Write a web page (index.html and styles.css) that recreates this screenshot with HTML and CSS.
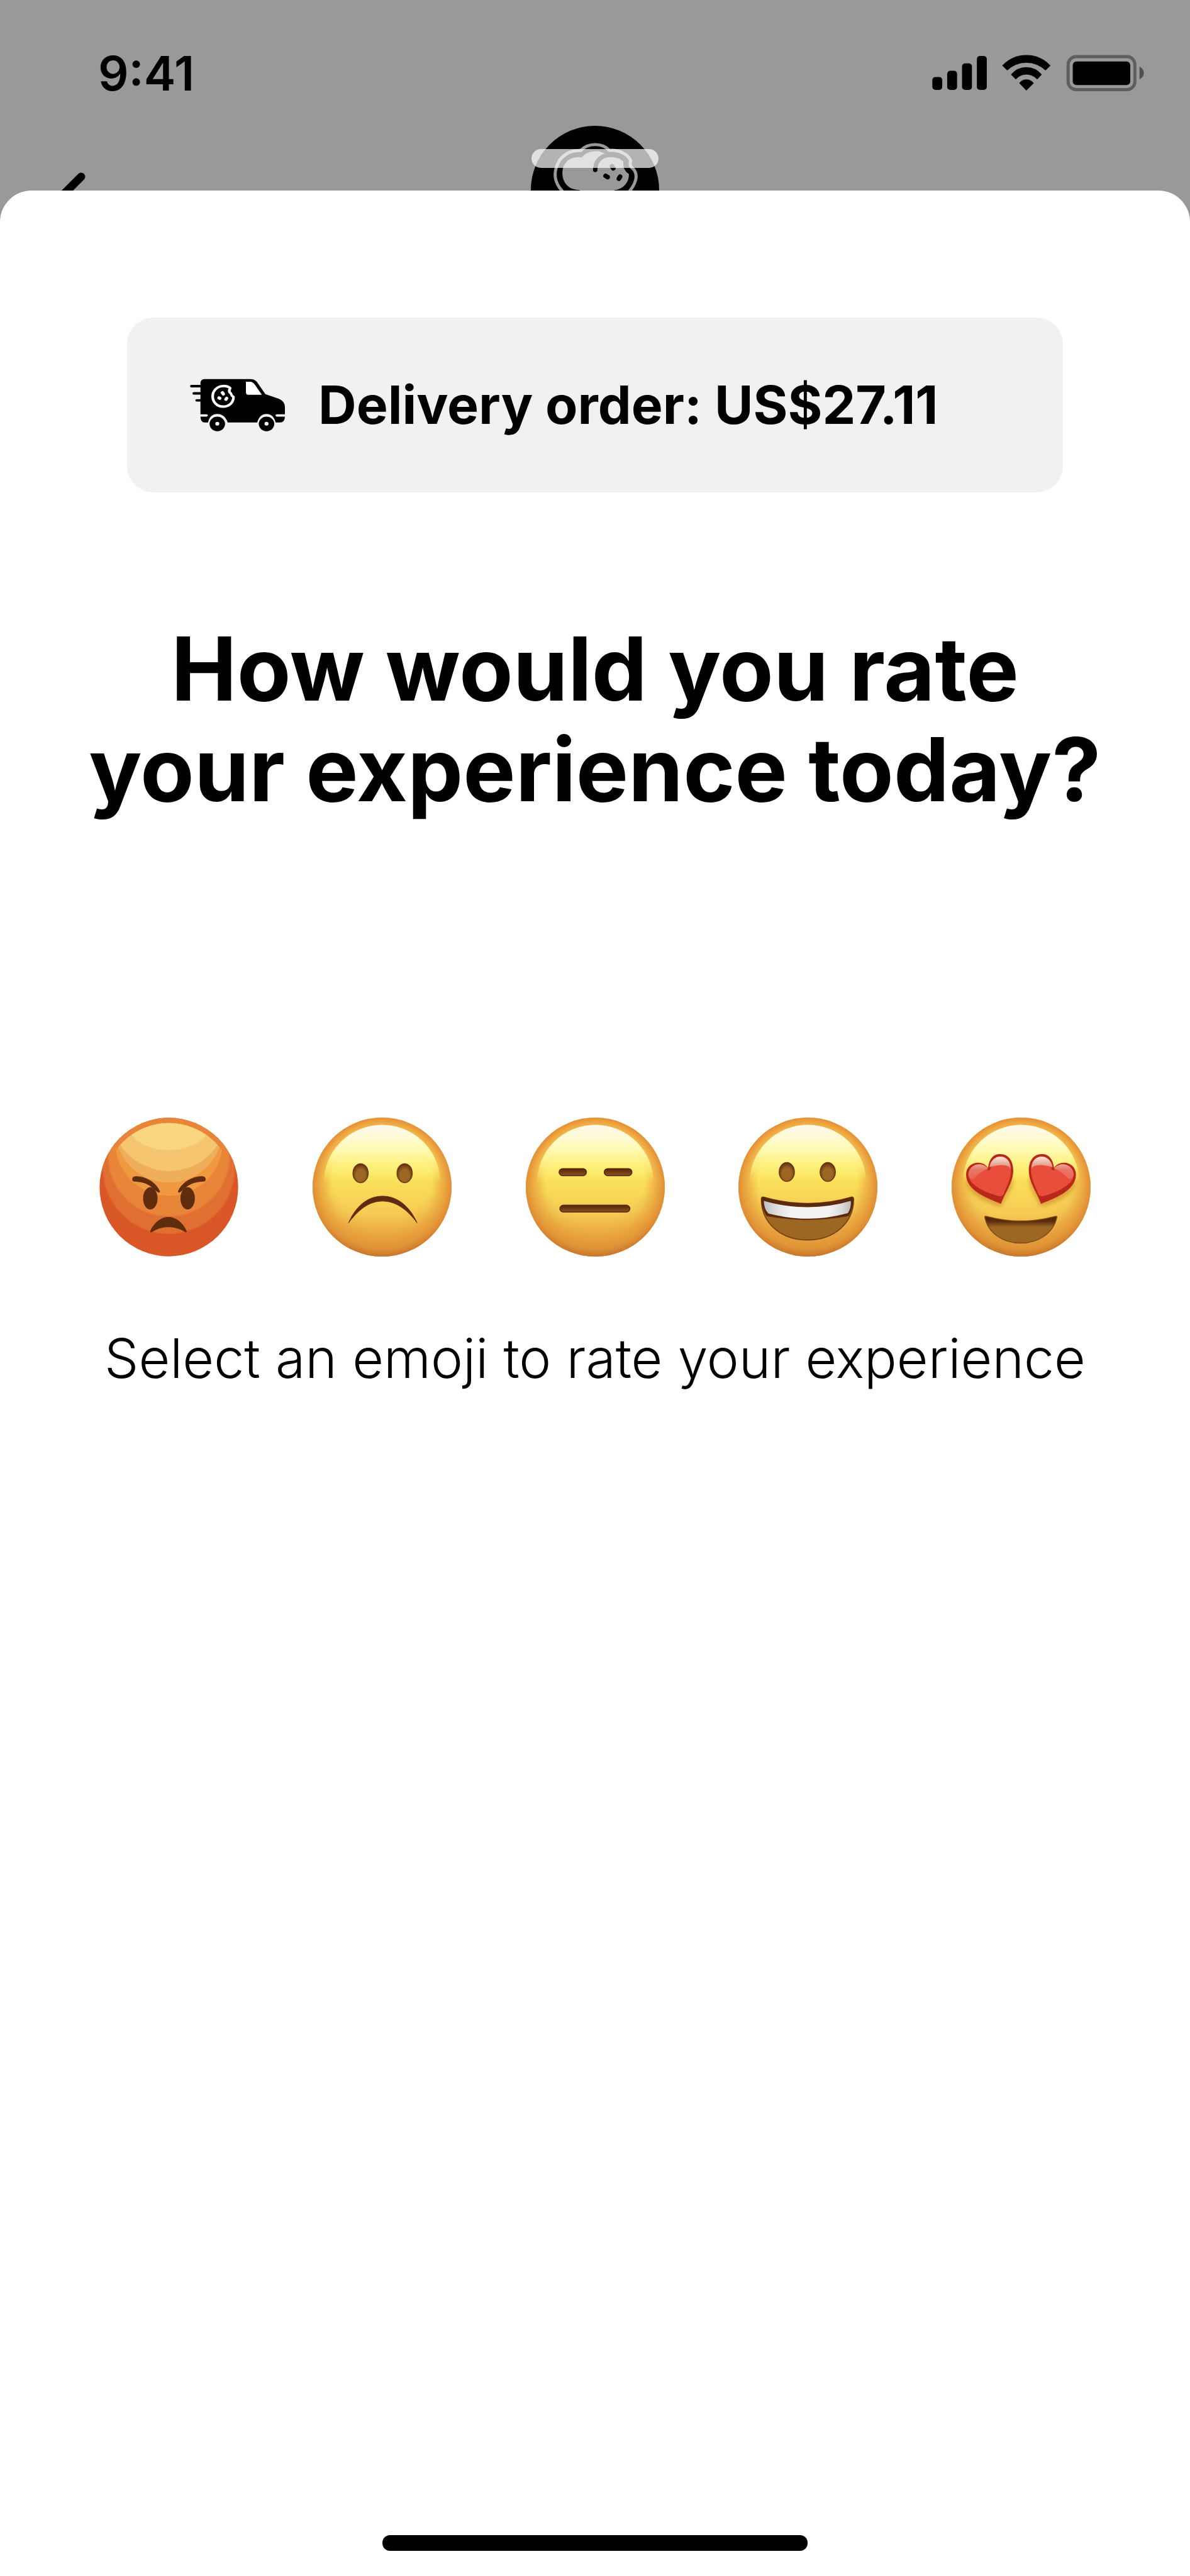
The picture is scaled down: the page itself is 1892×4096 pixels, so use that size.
FILE: index.html
```html
<!DOCTYPE html>
<html lang="en">
<head>
<meta charset="utf-8">
<meta name="viewport" content="width=device-width, initial-scale=1">
<title>Rate your experience</title>
<link rel="stylesheet" href="styles.css">
</head>
<body>
<div class="screen">
  <div class="status-bar">
    <time class="clock">9:41</time>
    <svg class="status-icons" viewBox="1505 88 343 60" aria-hidden="true">
      <rect x="1505" y="124" width="16" height="21" rx="5"/>
      <rect x="1529" y="114" width="16" height="31" rx="5"/>
      <rect x="1553" y="102" width="16" height="43" rx="5"/>
      <rect x="1577" y="90" width="16" height="55" rx="5"/>
      <path d="M1618 105.500Q1634 88.500 1657 88.500T1696 105.500L1688 113.500Q1674 101 1657 101T1626 113.500Z"/>
      <path d="M1632 120Q1642 108 1657 108T1682 120L1674.500 128Q1667 120 1657 120T1640 128Z"/>
      <path d="M1645.500 134Q1650 128 1657 128T1669 134L1657 146Z"/>
      <rect x="1724.500" y="91" width="108" height="53.500" rx="13" fill="none" stroke="#5e5e5e" stroke-width="5"/>
      <rect x="1732" y="99" width="93" height="38" rx="6"/>
      <path d="M1840 107Q1847 111 1847 117.500T1840 128Z" fill="#505050"/>
    </svg>
  </div>
  <header class="app-header">
    <button class="back" type="button" aria-label="Back">
      <svg viewBox="0 0 60 100" aria-hidden="true"><path d="M53 7L10 50L53 93" fill="none" stroke="#000" stroke-width="13" stroke-linecap="round" stroke-linejoin="round"/></svg>
    </button>
    <svg class="logo" viewBox="170 68 618 618" role="img" aria-label="Cookie logo">
      <circle cx="479" cy="377" r="309"/>
      <path d="M340 400C285 355 280 305 293 268C308 215 355 185 410 187C445 149 515 149 549 187C592 182 640 205 651 237C645 255 650 266 660 273C690 300 680 350 630 400" fill="none" stroke="#999" stroke-width="15"/>
      <path d="M405 377C350 377 322 340 322 295C322 245 360 213 415 221C440 188 495 180 527 203L560 218C590 218 612 228 617 240C612 265 622 285 642 300C645 345 605 377 573 377V420H405Z" fill="#999"/>
      <path d="M480 281C480 240 507 209 553 208C590 207 617 222 628 240C624 260 630 280 650 292" fill="none" stroke="#000" stroke-width="21" stroke-linecap="round"/>
      <path d="M530 309L540 315M600 313L594 323M561 263L567 273" stroke="#000" stroke-width="22" stroke-linecap="round"/>
    </svg>
  </header>

  <main class="sheet">
    <span class="grabber"></span>
    <div class="order">
      <svg class="van" viewBox="107 111 154 86" aria-hidden="true">
        <g transform="scale(.357143 .333333)">
          <path d="M306 369H352M317 404H352M330 438H352" stroke="#000" stroke-width="12" stroke-linecap="round"/>
          <path d="M347 357Q347 335 366 335H572Q590 335 601 348L640 408L700 430Q728 442 728 470V515Q728 545 706 545H686Q676 504 645 504T603 545H470Q456 504 423 504T381 545H366Q347 545 347 515Z"/>
          <path d="M552 348H572Q582 348 592 362L624 411H563Q552 411 552 398Z" fill="#fff"/>
          <path d="M345 511H375M691 511H730" stroke="#f1f1f1" stroke-width="11" stroke-linecap="round"/>
          <circle cx="423" cy="552" r="35"/><circle cx="645" cy="552" r="35"/>
          <circle cx="423" cy="551" r="9" fill="#fff"/><circle cx="645" cy="551" r="9" fill="#fff"/>
          <path d="M481 379C472 370 458 368 447 369C421 371 402 392 402 419C402 447 422 468 449 468C475 468 496 450 496 421C486 417 487 411 484 404C474 398 475 390 481 379Z" fill="none" stroke="#fff" stroke-width="12" stroke-linejoin="round"/>
          <path d="M446 401L450 407M431 426L434 428M465 428L462 433" stroke="#fff" stroke-width="15" stroke-linecap="round"/>
        </g>
      </svg>
      <p class="order-text">Delivery order: US$27.11</p>
    </div>

    <h1 class="title">How would you rate<br>your experience today?</h1>

    <div class="ratings" role="group" aria-labelledby="hint">
      <button class="rating" type="button" aria-label="Terrible">
        <svg viewBox="64 66 672 674">
          <defs>
            <clipPath id="face-a"><circle cx="400" cy="403" r="336"/></clipPath>
            <clipPath id="shine-a"><circle cx="400" cy="410" r="317"/></clipPath>
            <filter id="soft-a" x="-10%" y="-10%" width="120%" height="120%"><feGaussianBlur stdDeviation="4"/></filter>
          </defs>
          <g clip-path="url(#face-a)">
            <rect x="60" y="60" width="680" height="690" fill="#d95626"/>
            <g filter="url(#soft-a)">
              <circle cx="400" cy="309" r="321" fill="#e06f30"/>
              <ellipse cx="400" cy="255" rx="294" ry="290" fill="#e98538"/>
            </g>
            <path d="M120 190Q220 72 400 72T680 190L650 210Q560 96 400 96T150 210Z" fill="#e98538"/>
          </g>
          <g clip-path="url(#shine-a)">
            <circle cx="400" cy="184" r="261" fill="#ef9a40"/>
            <circle cx="400" cy="121" r="260" fill="#f0ae5a"/>
            <circle cx="400" cy="41" r="284" fill="#f5c570"/>
            <ellipse cx="400" cy="110" rx="192" ry="114" fill="#f9d780"/>
          </g>
          <g fill="#5f2c0e">
            <ellipse cx="310" cy="458" rx="35" ry="54"/><ellipse cx="491" cy="458" rx="35" ry="54"/>
            <path d="M222 365C225 348 242 350 260 352C305 360 342 388 357 424C355 432 350 431 344 427L320 407C300 387 266 376 232 376Q222 374 222 365Z"/>
            <path d="M579 365C576 348 559 350 541 352C496 360 459 388 444 424C446 432 451 431 457 427L481 407C501 387 535 376 569 376Q579 374 579 365Z"/>
            <path d="M309 617C330 572 364 548 398 548S466 572 487 617Q486 625 478 621C430 590 366 590 318 621Q309 625 309 617Z"/>
          </g>
        </svg>
      </button>
      <button class="rating" type="button" aria-label="Bad">
        <svg viewBox="72 67 672 672">
          <defs>
            <linearGradient id="body" x1="0" y1="0" x2="0" y2="1">
              <stop offset="0" stop-color="#fbd84f"/><stop offset=".3" stop-color="#fdec68"/><stop offset=".48" stop-color="#f9de58"/><stop offset=".68" stop-color="#f6cb54"/><stop offset=".85" stop-color="#efae41"/><stop offset="1" stop-color="#df9637"/>
            </linearGradient>
            <radialGradient id="rim">
              <stop offset=".72" stop-color="#f0a23c" stop-opacity="0"/><stop offset=".88" stop-color="#eea33e" stop-opacity=".65"/><stop offset="1" stop-color="#e88d37"/>
            </radialGradient>
            <radialGradient id="shade" cx=".5" cy=".38" r=".66">
              <stop offset=".55" stop-color="#e09a38" stop-opacity="0"/><stop offset=".84" stop-color="#d88b32" stop-opacity=".55"/><stop offset="1" stop-color="#b36125"/>
            </radialGradient>
            <linearGradient id="shine" x1="0" y1="0" x2="0" y2="1">
              <stop offset="0" stop-color="#fcf9ee"/><stop offset=".12" stop-color="#fffbd2"/><stop offset=".24" stop-color="#fff8a8"/><stop offset=".36" stop-color="#fef180" stop-opacity=".8"/><stop offset=".5" stop-color="#fded6c" stop-opacity="0"/>
            </linearGradient>
            <radialGradient id="hollow" cx=".5" cy=".6" r=".6"><stop offset=".5" stop-color="#9c6723"/><stop offset="1" stop-color="#5f2b0e"/></radialGradient>
            <linearGradient id="slot" x1="0" y1="0" x2="0" y2="1"><stop offset="0" stop-color="#542408"/><stop offset=".4" stop-color="#6c3812"/><stop offset="1" stop-color="#8a551b"/></linearGradient>
            <g id="yellow-face">
              <circle r="336" fill="url(#body)"/>
              <circle r="336" fill="url(#rim)"/>
              <circle r="336" fill="url(#shade)"/>
              <ellipse cy="-20" rx="282" ry="281" fill="url(#shine)"/>
            </g>
          </defs>
          <use href="#yellow-face" x="408" y="403"/>
          <g fill="url(#hollow)" stroke="#6b3812" stroke-width="4">
            <ellipse cx="304" cy="336" rx="37" ry="46"/><ellipse cx="517" cy="336" rx="37" ry="46"/>
          </g>
          <path d="M246 576C280 498 336 447 410 447S542 498 577 576C534 517 478 471 410 471S290 517 246 576Z" fill="#5f2b0e" stroke="#5f2b0e" stroke-width="3" stroke-linejoin="round"/>
        </svg>
      </button>
      <button class="rating" type="button" aria-label="Okay">
        <svg viewBox="52 67 672 672">
          <use href="#yellow-face" x="388" y="403"/>
          <g fill="url(#slot)" stroke="#5a2a0c" stroke-width="5">
            <rect x="213" y="314" width="132" height="34" rx="17"/><rect x="431" y="314" width="134" height="34" rx="17"/><rect x="217" y="491" width="338" height="33" rx="17"/>
          </g>
        </svg>
      </button>
      <button class="rating" type="button" aria-label="Good">
        <svg viewBox="61 67 672 672">
          <defs>
            <linearGradient id="teeth"><stop offset="0" stop-color="#bcbcbc"/><stop offset=".14" stop-color="#dedede"/><stop offset=".3" stop-color="#f2f2f2"/><stop offset=".75" stop-color="#f2f2f2"/><stop offset=".9" stop-color="#dadada"/><stop offset="1" stop-color="#bcbcbc"/></linearGradient>
          </defs>
          <use href="#yellow-face" x="397" y="403"/>
          <g fill="url(#hollow)" stroke="#6b3812" stroke-width="4">
            <ellipse cx="295" cy="330" rx="37" ry="46"/><ellipse cx="493" cy="330" rx="37" ry="46"/>
          </g>
          <path d="M172 462Q172 449 184 452Q285 482 397 482T606 452Q618 449 618 462C618 574 527 659 395 659S172 574 172 462Z" fill="#9c6723" stroke="#75420f" stroke-width="5"/>
          <path d="M172 462Q172 449 184 452Q285 482 397 482T606 452Q618 449 618 462Q616 506 595 543Q490 562 395 562T196 543Q173 502 172 462Z" fill="#5b290b"/>
          <path d="M184 470Q285 500 395 500T604 470Q608 502 590 529Q490 556 395 556T206 531Q184 508 184 470Z" fill="url(#teeth)"/>
        </svg>
      </button>
      <button class="rating" type="button" aria-label="Excellent">
        <svg viewBox="73 70 672 672">
          <defs>
            <linearGradient id="gloss" gradientUnits="userSpaceOnUse" x1="0" y1="250" x2="0" y2="370"><stop offset="0" stop-color="#fff3ea"/><stop offset=".4" stop-color="#e8a592"/><stop offset=".6" stop-color="#e87767"/><stop offset="1" stop-color="#e96455"/></linearGradient>
            <filter id="glow" x="-20%" y="-20%" width="140%" height="150%"><feGaussianBlur stdDeviation="12"/></filter>
            <linearGradient id="mouth" x1="0" y1="0" x2="0" y2="1"><stop offset="0" stop-color="#4e2106"/><stop offset=".2" stop-color="#5f2f0c"/><stop offset=".4" stop-color="#9c6723"/><stop offset="1" stop-color="#9c6723"/></linearGradient>
            <g id="heart">
              <path d="M314 500C230 480 140 440 146 370Q250 330 370 370C372 410 335 450 314 500Z" fill="#cf8429" opacity=".65" filter="url(#glow)"/>
              <path d="M312 487C255 462 143 427 143 345C143 283 222 270 249 313C255 268 275 246 308 246C350 246 371 283 371 325C371 385 332 430 312 487Z" fill="#ba281b"/>
              <path d="M154 345C156 296 220 278 249 325C262 330 264 305 268 290C275 250 355 242 360 322C360 370 338 400 325 440Q318 452 300 450C225 428 154 392 154 345Z" fill="#e94d3b"/>
              <path d="M154 345C156 296 220 278 249 316Q210 330 176 368Q157 366 154 345ZM256 310C266 240 358 240 359 318Q340 285 256 310Z" fill="url(#gloss)"/>
            </g>
          </defs>
          <use href="#yellow-face" x="409" y="406"/>
          <use href="#heart"/>
          <use href="#heart" transform="translate(817 0) scale(-1 1)"/>
          <path d="M233 550Q236 545 248 549Q330 570 408 570T568 549Q580 545 582 550C568 625 497 677 407 677S247 625 233 550Z" fill="url(#mouth)" stroke="#7b4a16" stroke-width="4"/>
        </svg>
      </button>
    </div>
    <p class="hint" id="hint">Select an emoji to rate your experience</p>
    <span class="home-indicator"></span>
  </main>
</div>
</body>
</html>
```
FILE: styles.css
```css
* {
  box-sizing: border-box;
}

body {
  margin: 0;
  background: #999;
  color: #000;
  font-family: Inter, "Open Sans", sans-serif;
}

p,
h1 {
  margin: 0;
}

button {
  padding: 0;
  border: 0;
  background: none;
  cursor: pointer;
}

svg {
  display: block;
}

.screen {
  display: flex;
  flex-direction: column;
  min-height: 100vh;
}

.status-bar {
  display: flex;
  align-items: center;
  justify-content: space-between;
  height: 200px;
  padding: 32px 72px 0 156px;
}

.clock {
  font-size: 76px;
  font-weight: 600;
  line-height: 80px;
}

.status-icons {
  width: 338px;
  height: 59px;
}

.app-header {
  display: grid;
  grid-template-columns: 1fr auto 1fr;
  align-items: start;
  height: 204px;
  padding: 0 76px;
}

.back {
  width: 60px;
  height: 100px;
  margin-top: 74px;
}

.logo {
  width: 204px;
  height: 204px;
}

.sheet {
  position: relative;
  display: flex;
  flex: 1;
  flex-direction: column;
  margin-top: -101px;
  padding: 202px 0 40px;
  border-radius: 50px 50px 0 0;
  background: #fff;
}

.grabber {
  position: absolute;
  top: -66px;
  left: 50%;
  width: 202px;
  height: 30px;
  margin-left: -101px;
  border-radius: 15px;
  background: rgba(255, 255, 255, .7);
}

.order {
  display: flex;
  align-items: center;
  gap: 52px;
  height: 278px;
  margin: 0 202px;
  padding: 0 100px;
  border-radius: 42px;
  background: #f1f1f1;
}

.van {
  flex: none;
  width: 152px;
  height: 85px;
}

.order-text {
  font-size: 84px;
  font-weight: 700;
  line-height: 100px;
  white-space: nowrap;
}

.title {
  margin-top: 200px;
  font-size: 140px;
  font-weight: 700;
  line-height: 160px;
  text-align: center;
}

.ratings {
  display: flex;
  justify-content: space-between;
  margin-top: 474px;
  padding: 0 158px;
}

.rating,
.rating svg {
  width: 221px;
  height: 221px;
}

.hint {
  margin-top: 112px;
  font-size: 86px;
  font-weight: 300;
  line-height: 100px;
  text-align: center;
}

.home-indicator {
  width: 676px;
  height: 25px;
  margin: auto auto 0;
  border-radius: 12px;
  background: #000;
}
```
